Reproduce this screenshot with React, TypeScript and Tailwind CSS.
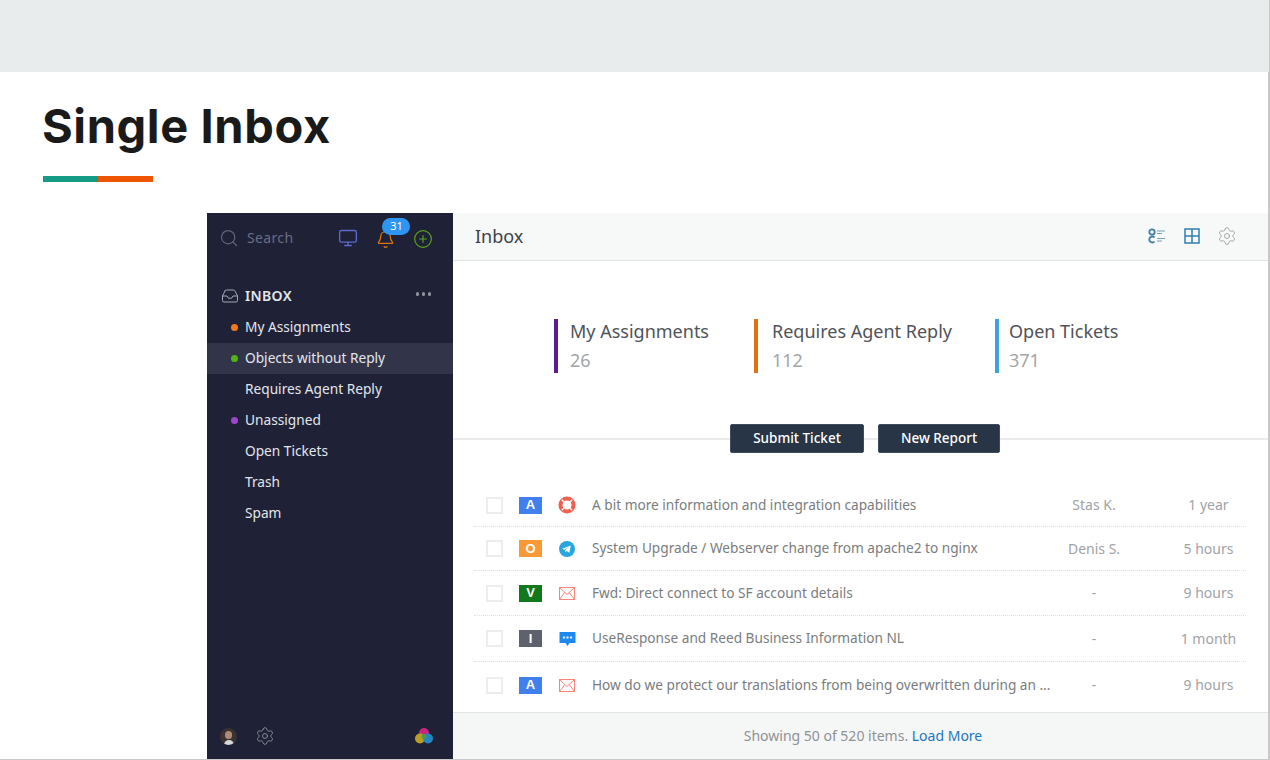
import { Search, Monitor, Bell, CirclePlus, Inbox, Settings } from "lucide-react";

const NAV = [
  { label: "My Assignments", dot: "bg-[#f07a14]" },
  { label: "Objects without Reply", dot: "bg-[#4fb414]", active: true },
  { label: "Requires Agent Reply" },
  { label: "Unassigned", dot: "bg-[#a145c8]" },
  { label: "Open Tickets" },
  { label: "Trash" },
  { label: "Spam" },
];

const STATS = [
  { label: "My Assignments", value: "26", bar: "bg-[#5b1a96]", cls: "w-[200px]", pad: "pl-[12px]" },
  { label: "Requires Agent Reply", value: "112", bar: "bg-[#e0730f]", cls: "w-[241px]", pad: "pl-[14px]" },
  { label: "Open Tickets", value: "371", bar: "bg-[#3ea3de]", cls: "w-[140px]", pad: "pl-[10px]" },
];

const ROWS = [
  { letter: "A", color: "bg-[#3f7fee]", icon: "life", title: "A bit more information and integration capabilities", who: "Stas K.", when: "1 year", h: "h-[43px]" },
  { letter: "O", color: "bg-[#fb9a34]", icon: "telegram", title: "System Upgrade / Webserver change from apache2 to nginx", who: "Denis S.", when: "5 hours", h: "h-[44px]" },
  { letter: "V", color: "bg-[#11791a]", icon: "mail", title: "Fwd: Direct connect to SF account details", who: "-", when: "9 hours", h: "h-[45px]" },
  { letter: "I", color: "bg-[#5d626c]", icon: "chat", title: "UseResponse and Reed Business Information NL", who: "-", when: "1 month", h: "h-[46px]" },
  { letter: "A", color: "bg-[#3f7fee]", icon: "mail", title: "How do we protect our translations from being overwritten during an ...", who: "-", when: "9 hours", h: "h-[46px]" },
];

function ChannelIcon({ kind }: { kind: string }) {
  if (kind === "life")
    return (
      <svg width="18" height="18" viewBox="0 0 18 18" fill="none">
        <circle cx="9" cy="9" r="6.500" stroke="#f0604f" strokeWidth="4" />
        <path d="M3.800 3.800 6.800 6.800M14.200 3.800 11.200 6.800M3.800 14.200 6.800 11.200M14.200 14.200 11.200 11.200" stroke="#fff" strokeWidth="1.300" />
      </svg>
    );
  if (kind === "mail")
    return (
      <svg width="16" height="13" viewBox="0 0 16 13" fill="none" stroke="#f8857c" strokeWidth="1">
        <rect x="0.500" y="0.500" width="15" height="12" />
        <path d="M0.500 0.500 8 7.500 15.500 0.500M0.500 12.500 5.800 5.500M15.500 12.500 10.200 5.500" />
      </svg>
    );
  if (kind === "telegram")
    return (
      <svg width="16" height="16" viewBox="0 0 16 16">
        <circle cx="8" cy="8" r="8" fill="#2aa6de" />
        <path d="M3.200 7.800 11.800 4.400 10.400 11.800 7.800 9.900 6.500 11.200 6.200 9 10.200 5.800 5.200 8.700z" fill="#fff" />
      </svg>
    );
  return (
    <svg width="17" height="16" viewBox="0 0 17 16">
      <path d="M1 1h15a.5.5 0 0 1 .5.5v10a.5.5 0 0 1-.5.5h-5.500L8.500 15 6.500 12H1a.5.5 0 0 1-.5-.5v-10A.5.5 0 0 1 1 1z" fill="#1e88ee" />
      <circle cx="5" cy="6.500" r="1.200" fill="#cfe6fb" />
      <circle cx="8.500" cy="6.500" r="1.200" fill="#cfe6fb" />
      <circle cx="12" cy="6.500" r="1.200" fill="#cfe6fb" />
    </svg>
  );
}

function Sidebar() {
  return (
    <aside className="flex w-[246px] shrink-0 flex-col bg-[#1f2236]">
      <div className="flex h-[50px] items-center pl-[12px]">
        <Search size={20} strokeWidth={1.5} className="text-[#5f6474]" />
        <span className="ml-2 text-sm tracking-wide text-[#686d84]">Search</span>
        <Monitor size={20} strokeWidth={1.6} className="ml-[45px] text-[#5f68cc]" />
        <div className="relative ml-[18px] mt-[3px]">
          <Bell size={19} strokeWidth={1.6} className="text-[#dc7414]" />
          <span className="absolute -top-[12px] left-[6px] flex h-[17px] w-[28px] items-center justify-center rounded-full bg-[#2f95f2] text-[11px] text-white">
            31
          </span>
        </div>
        <CirclePlus size={20} strokeWidth={1.4} className="ml-[18px] mt-px text-[#5aa51e]" />
      </div>
      <div className="mt-[17px] flex h-[32px] items-center pl-[14px] pr-[22px]">
        <Inbox size={18} strokeWidth={1.3} className="text-[#a8abb6]" />
        <span className="ml-[6px] text-sm font-semibold tracking-wide text-[#e4e6ea]">INBOX</span>
        <span className="ml-auto -mt-[4px] flex gap-[2.500px]">
          <span className="h-[3.500px] w-[3.500px] rounded-full bg-[#8f93a0]" />
          <span className="h-[3.500px] w-[3.500px] rounded-full bg-[#8f93a0]" />
          <span className="h-[3.500px] w-[3.500px] rounded-full bg-[#8f93a0]" />
        </span>
      </div>
      <ul>
        {NAV.map((item) => (
          <li
            key={item.label}
            className={`relative flex h-[31px] items-center pl-[38px] text-[13.700px] text-[#e3e5ea] ${item.active ? "bg-[#32354a]" : ""}`}
          >
            {item.dot ? <span className={`absolute left-[24px] h-[7px] w-[7px] rounded-full ${item.dot}`} /> : null}
            {item.label}
          </li>
        ))}
      </ul>
      <div className="mt-auto flex h-[46px] items-center pl-[13px] pr-[20px]">
        <span className="relative h-[17px] w-[17px] overflow-hidden rounded-full bg-[#3a3230]">
          <span className="absolute left-[5px] top-[3px] h-[8px] w-[7px] rounded-full bg-[#b08a78]" />
          <span className="absolute bottom-0 left-[4px] h-[5px] w-[10px] rounded-t-full bg-[#d8d8d8]" />
        </span>
        <Settings size={20} strokeWidth={1.1} className="ml-[18px] text-[#8a8e9c]" />
        <svg width="18" height="18" viewBox="0 0 18 18" className="ml-auto">
          <circle cx="9" cy="6" r="5" fill="#c8257f" />
          <circle cx="5" cy="11.500" r="5" fill="#b8a023" />
          <circle cx="13" cy="11.500" r="5" fill="#2387c4" />
          <circle cx="9" cy="9.500" r="2.500" fill="#4c9a4a" />
        </svg>
      </div>
    </aside>
  );
}

export default function App() {
  return (
    <div className="h-[760px] w-[1270px] overflow-hidden bg-white font-['Noto_Sans',sans-serif]">
      <div className="h-[72px] border-r border-r-[#c8c8c8] bg-[#e8ecec]" />
      <div className="h-[688px] border-r-2 border-b border-[#c9c9c9]">
        <div className="h-[141px] pl-[42px] pt-[22px]">
          <h1 className="font-['Inter',sans-serif] text-[47px] font-bold leading-[64px] tracking-[0.6px] text-[#1a1a1a]">Single Inbox</h1>
          <div className="ml-px mt-[18px] flex h-[6px] w-[110px]">
            <div className="w-[55px] bg-[#149a85]" />
            <div className="flex-1 bg-[#ee5500]" />
          </div>
        </div>
        <div className="ml-[207px] flex h-[546px]">
          <Sidebar />
          <main className="flex flex-1 flex-col bg-white">
            <header className="flex h-[48px] items-center border-b border-[#e2e4e4] bg-[#f7f8f8] pb-px pl-[22px] pr-[31px]">
              <span className="text-lg text-[#3d4248]">Inbox</span>
              <svg width="18" height="16" viewBox="0 0 18 16" fill="none" className="ml-auto text-[#3f7fa8]" stroke="currentColor">
                <circle cx="4" cy="4" r="2.700" strokeWidth="1.800" />
                <path d="M6.500 9.500A3 3 0 1 0 6.500 13.500" strokeWidth="1.800" />
                <path d="M9 3h8M9 5.500h5M9 10.500h8M9 13h5" strokeWidth="1.200" opacity="0.7" />
              </svg>
              <svg width="16" height="16" viewBox="0 0 16 16" fill="none" stroke="#2f7fb0" strokeWidth="1.500" className="ml-[18px]">
                <rect x="1" y="1" width="14" height="14" />
                <path d="M8 1v14M1 8h14" />
              </svg>
              <Settings size={20} strokeWidth={1.1} className="ml-[17px] text-[#9ca0a4]" />
            </header>
            <div className="-mt-[1px] flex h-[112px] items-start pl-[101px] pt-[59px]">
              {STATS.map((stat) => (
                <div key={stat.label} className={`flex h-[54px] ${stat.cls}`}>
                  <div className={`w-[4px] ${stat.bar}`} />
                  <div className={stat.pad}>
                    <div className="text-lg leading-[24px] text-[#4f5358]">{stat.label}</div>
                    <div className="mt-[5px] text-lg leading-[24px] text-[#a3a6a8]">{stat.value}</div>
                  </div>
                </div>
              ))}
            </div>
            <div className="mt-[52px] flex items-center">
              <div className="h-[2px] w-[277px] bg-[#eaecec]" />
              <button className="h-[29px] w-[134px] rounded-[2px] border border-[#3d4c5e] bg-[#273546] text-[13.500px] font-medium text-white">Submit Ticket</button>
              <div className="h-[2px] w-[14px] bg-[#eaecec]" />
              <button className="h-[29px] w-[122px] rounded-[2px] border border-[#3d4c5e] bg-[#273546] text-[13.500px] font-medium text-white">New Report</button>
              <div className="h-[2px] flex-1 bg-[#eaecec]" />
            </div>
            <div className="ml-[21px] mr-[22px] mt-[31px] flex-1">
              {ROWS.map((row, i) => (
                <div
                  key={row.title}
                  className={`flex items-center pl-[12px] ${row.h} ${i < ROWS.length - 1 ? "border-b border-dotted border-[#dfe1e1]" : ""}`}
                >
                  <span className="h-[17px] w-[17px] border-2 border-[#eceded]" />
                  <span className={`ml-[16px] flex h-[17px] w-[23px] items-center justify-center font-['Liberation_Sans',sans-serif] text-[13px] font-semibold text-white ${row.color}`}>
                    {row.letter}
                  </span>
                  <span className="ml-[15px] flex w-[20px] justify-center">
                    <ChannelIcon kind={row.icon} />
                  </span>
                  <span className="ml-[15px] w-[460px] truncate text-[13.650px] text-[#7a7d80]">{row.title}</span>
                  <span className="w-[84px] text-center text-sm text-[#a0a3a6]">{row.who}</span>
                  <span className="flex-1 pl-[35px] text-center text-sm text-[#a0a3a6]">{row.when}</span>
                </div>
              ))}
            </div>
            <footer className="flex h-[47px] items-center justify-center border-t border-[#e2e4e4] bg-[#f5f6f6] pl-[5px] text-sm text-[#8f9295]">
              Showing 50 of 520 items.&nbsp;<span className="text-[#1d78c0]">Load More</span>
            </footer>
          </main>
        </div>
      </div>
    </div>
  );
}
